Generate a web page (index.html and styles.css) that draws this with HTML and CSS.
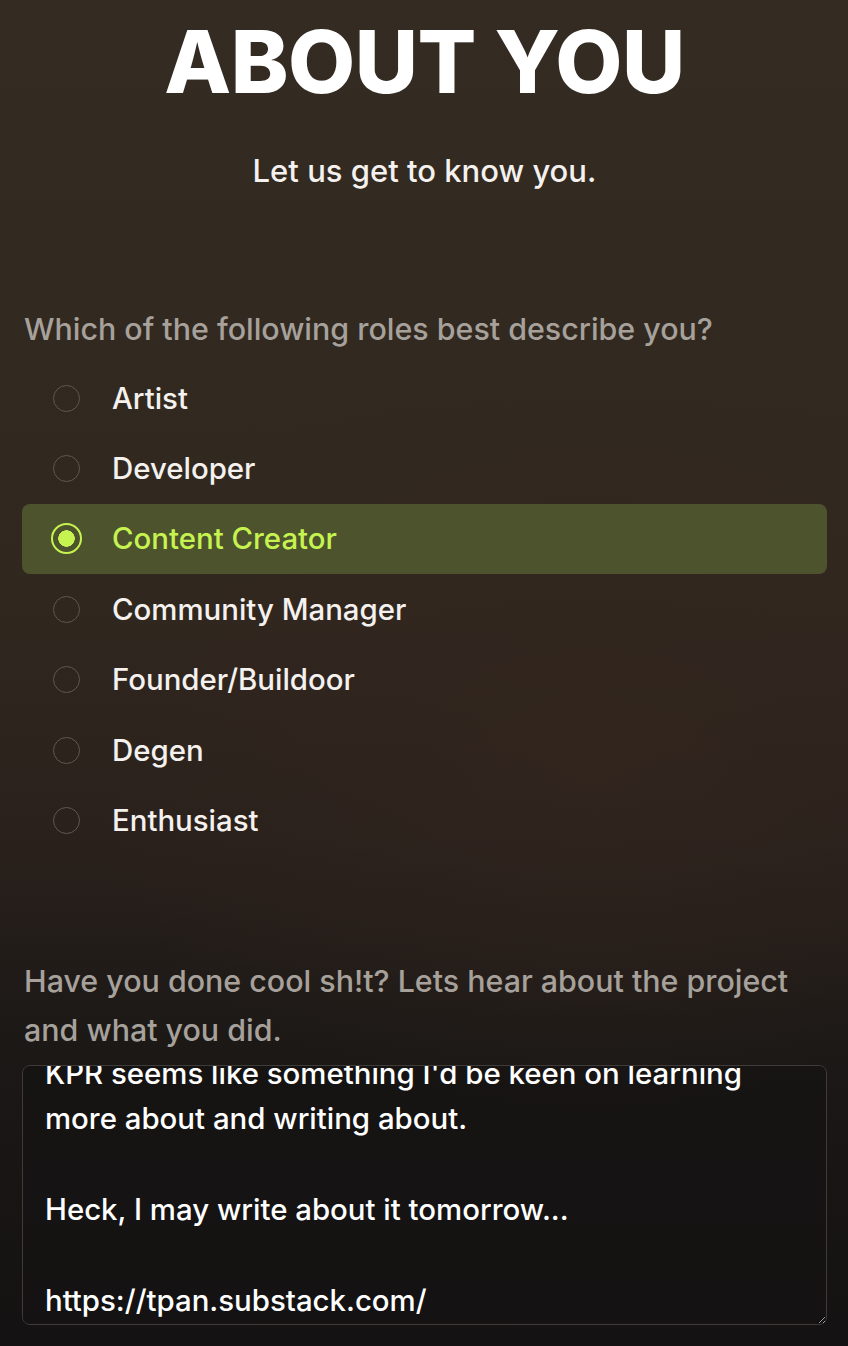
FILE: index.html
```html
<!DOCTYPE html>
<html lang="en">
<head>
    <meta charset="UTF-8">
    <meta name="viewport" content="width=device-width, initial-scale=1.0">
    <title>About You</title>
    <link rel="stylesheet" href="styles.css">
</head>
<body>
    <div class="page">
        <h1 class="title">ABOUT YOU</h1>
        <p class="subtitle">Let us get to know you.</p>

        <p class="question">Which of the following roles best describe you?</p>
        <div class="options">
            <label class="option"><input type="radio" name="role"><span class="dot"></span>Artist</label>
            <label class="option"><input type="radio" name="role"><span class="dot"></span>Developer</label>
            <label class="option selected"><input type="radio" name="role" checked><span class="dot"></span>Content Creator</label>
            <label class="option"><input type="radio" name="role"><span class="dot"></span>Community Manager</label>
            <label class="option"><input type="radio" name="role"><span class="dot"></span>Founder/Buildoor</label>
            <label class="option"><input type="radio" name="role"><span class="dot"></span>Degen</label>
            <label class="option"><input type="radio" name="role"><span class="dot"></span>Enthusiast</label>
        </div>

        <p class="question question-two">Have you done cool sh!t? Lets hear about the project and what you did.</p>
        <textarea id="project" class="answer">KPR seems like something I'd be keen on learning more about and writing about.

Heck, I may write about it tomorrow...

https://tpan.substack.com/</textarea>
    </div>

    <script>
        // keep the end of the answer in view, like after typing
        const answer = document.getElementById('project');
        answer.scrollTop = answer.scrollHeight;
    </script>
</body>
</html>
```

FILE: styles.css
```css
html {
    background: #141212;
}
body {
    margin: 0;
    min-height: 1346px;
    font-family: Inter, "Liberation Sans", sans-serif;
    color: #f4f1ee;
    background:
        radial-gradient(ellipse 60% 30% at 70% 55%, rgba(52, 38, 30, 0.6), transparent),
        linear-gradient(180deg, #342c23 0%, #30271f 45%, #2a211c 62%, #1b1816 78%, #141212 100%);
}
.page {
    padding: 0 21px 0 22px;
}
.title {
    margin: 0;
    padding-top: 14px;
    text-align: center;
    font-size: 87px;
    font-weight: 800;
    letter-spacing: -0.5px;
    line-height: 96px;
    color: #fff;
}
.subtitle {
    margin: 41px 0 0;
    text-align: center;
    font-size: 31px;
    font-weight: 500;
    line-height: 40px;
}
.question {
    margin: 114px 0 0 2px;
    font-size: 30.4px;
    font-weight: 500;
    line-height: 49px;
    color: #a7a19b;
}
.options {
    margin-top: 9px;
    display: flex;
    flex-direction: column;
}
.option {
    display: flex;
    align-items: center;
    height: 70.4px;
    padding-left: 31px;
    border-radius: 8px;
    font-size: 29.4px;
    font-weight: 500;
    cursor: pointer;
}
.option input {
    display: none;
}
.dot {
    width: 27px;
    height: 27px;
    margin-right: 32px;
    border: 1.5px solid #625750;
    border-radius: 50%;
    box-sizing: border-box;
    flex-shrink: 0;
}
.option.selected {
    background: #4d532d;
    color: #c6f34f;
}
.option.selected .dot {
    width: 31px;
    height: 31px;
    margin-left: -2px;
    margin-right: 30px;
    border: 2px solid #c6f34f;
    background: radial-gradient(circle, #c6f34f 0 8px, transparent 8.5px);
}
.question-two {
    margin-top: 101px;
}
.answer {
    display: block;
    width: 100%;
    height: 260px;
    margin-top: 10px;
    box-sizing: border-box;
    padding: 10px 22px 0;
    border: 1.5px solid #3f3b39;
    border-radius: 8px;
    background: rgba(20, 18, 18, 0.6);
    color: #fff;
    font-family: Inter, "Liberation Sans", sans-serif;
    font-size: 29.4px;
    font-weight: 500;
    line-height: 45.5px;
    scrollbar-width: none;
    outline: none;
}
```
